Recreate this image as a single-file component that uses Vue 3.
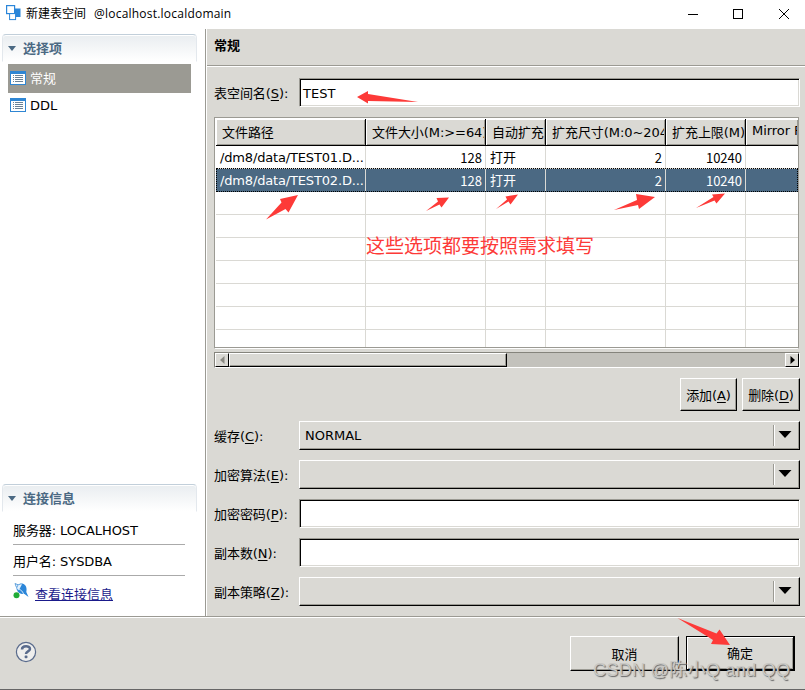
<template>
  <div class="window">
    <header class="titlebar">
      <svg class="app-icon" width="16" height="16" viewBox="0 0 16 16">
        <rect x="6" y="3.500" width="8.500" height="8.500" fill="#2b86d9" />
        <rect x=".6" y=".6" width="8" height="8" fill="#fff" stroke="#2b86d9" stroke-width="1.2" />
        <rect x="3.600" y="8.600" width="6" height="6" fill="#fff" stroke="#2b86d9" />
      </svg>
      <span class="title-cn">新建表空间</span>
      <span class="title-host">@localhost.localdomain</span>
      <svg class="controls" width="104" height="12" viewBox="0 0 104 12" fill="none" stroke="#000" shape-rendering="crispEdges">
        <path d="M0 6.5h10" />
        <rect x="45.5" y="1.5" width="9" height="9" />
        <path d="M91 1l10 10M101 1L91 11" shape-rendering="auto" />
      </svg>
    </header>

    <main class="body">
      <aside class="sidebar">
        <div class="section-head">
          <i class="twistie"></i><span>选择项</span>
        </div>
        <ul class="pages">
          <li v-for="(page, i) in pages" :key="page" :class="{ active: i === 0 }">
            <svg width="16" height="14" viewBox="0 0 16 14" shape-rendering="crispEdges">
              <rect width="16" height="14" fill="#2f86d3" />
              <rect x="1" y="3" width="14" height="10" fill="#fff" />
              <path d="M3 4.5h1M3 6.5h1M3 8.5h1M3 10.500h1M5 4.5h8M5 6.5h8M5 8.5h8M5 10.500h8" stroke="#6b8296" />
            </svg>
            <span>{{ page }}</span>
          </li>
        </ul>
        <div class="section-head connection">
          <i class="twistie"></i><span>连接信息</span>
        </div>
        <div class="info">
          <p>服务器: LOCALHOST</p>
          <p>用户名: SYSDBA</p>
          <div class="link-row">
            <svg width="17" height="17" viewBox="0 0 17 17">
              <path d="M2 1.500l3.500 1.500M2 1.500l1.500 4" fill="none" stroke="#5da0dc" />
              <path d="M3.500 6.500C3.500 3 7 1 10 1.800c3 1 4.200 4.500 3.300 8.200l2.200 5-4-3C8 12.500 4 10.500 3.500 6.500z" fill="#2b86d9" />
              <path d="M4 6.500C4 3.500 6.500 2 9 2.300L6 8z" fill="#e4f1fc" />
              <path d="M4.500 8C7 6.500 9.500 9 10.500 12" fill="none" stroke="#d7eafa" />
              <circle cx="3.500" cy="13.200" r="3" fill="#22ac38" />
            </svg>
            <a>查看连接信息</a>
          </div>
        </div>
      </aside>

      <section class="content">
        <h2>常规</h2>
        <div class="form">
          <div class="field">
            <label>表空间名(<u>S</u>):</label>
            <div class="input">TEST</div>
          </div>

          <div class="table">
            <div class="tr th">
              <div v-for="(col, i) in columns" :key="col" :class="{ latin: i === 5 }"><span>{{ col }}</span></div>
            </div>
            <div v-for="(row, r) in rows" :key="r" class="tr" :class="{ selected: r === 1 }">
              <div v-for="(cell, c) in row" :key="c" :class="{ num: numeric.includes(c), path: c === 0 }">{{ cell }}</div>
            </div>
          </div>

          <div class="scrollbar">
            <span class="sb-btn"><svg width="5" height="8" viewBox="0 0 5 8"><path d="M4.500 0v8L0 4z" fill="#8b8a83" /></svg></span>
            <span class="thumb"></span>
            <span class="sb-btn right"><svg width="5" height="8" viewBox="0 0 5 8"><path d="M.5 0v8L5 4z" /></svg></span>
          </div>

          <div class="actions">
            <button>添加(<u>A</u>)</button>
            <button>删除(<u>D</u>)</button>
          </div>

          <div v-for="f in fields" :key="f.key" class="field">
            <label>{{ f.label }}(<u>{{ f.key }}</u>):</label>
            <div v-if="f.select" class="combo">
              <span>{{ f.value }}</span>
              <i class="divider"></i>
              <svg width="14" height="7" viewBox="0 0 14 7"><path d="M.5 0h13L7 7z" /></svg>
            </div>
            <div v-else class="input"></div>
          </div>
        </div>
      </section>
    </main>

    <footer class="footer">
      <svg class="help" width="22" height="22" viewBox="0 0 22 22">
        <circle cx="11" cy="11" r="9.600" fill="#eeeeed" stroke="#596b8c" stroke-width="1.200" />
        <path d="M7 8.500C7 4.200 15 4.300 15 8c0 2.500-4 2.300-4 5" fill="none" stroke="#596b8c" stroke-width="2.500" />
        <rect x="9.600" y="14.600" width="2.900" height="2.700" rx="1" fill="#596b8c" />
      </svg>
      <button class="cancel">取消</button>
      <button class="ok">确定</button>
    </footer>

    <!-- annotations drawn over the dialog -->
    <svg class="marks" width="805" height="690" viewBox="0 0 805 690" fill="#fd3a38">
      <path v-for="d in arrows" :key="d" :d="d" />
    </svg>
    <div class="note">这些选项都要按照需求填写</div>
    <div class="watermark">CSDN @陈小Q and QQ</div>
  </div>
</template>

<script setup>
const pages = ['常规', 'DDL']

const columns = ['文件路径', '文件大小(M:>=64)', '自动扩充', '扩充尺寸(M:0~2048)', '扩充上限(M)', 'Mirror Path']
const numeric = [1, 3, 4]
const empty = ['', '', '', '', '', '']
const rows = [
  ['/dm8/data/TEST01.D...', '128', '打开', '2', '10240', ''],
  ['/dm8/data/TEST02.D...', '128', '打开', '2', '10240', ''],
  ...Array.from({ length: 7 }, () => empty)
]

const fields = [
  { label: '缓存', key: 'C', select: true, value: 'NORMAL' },
  { label: '加密算法', key: 'E', select: true },
  { label: '加密密码', key: 'P' },
  { label: '副本数', key: 'N' },
  { label: '副本策略', key: 'Z', select: true }
]

const arrows = [
  'M357 97l11-6v3l50 8-50-1v2.500z',
  'M266 219.500l15.500-17-1.500-3.500 18-4-9.500 17.500-3-3.500z',
  'M426 211l12-9.500-1.500-3.500 12.500-.5-7.500 10-2-3z',
  'M496 209l11-9.500-1.500-3 12.500-2-7.500 10-2-3z',
  'M614 210l23-10-1-6 19 3-16 12-1-4z',
  'M696 208l17.500-11-1.500-2.500 13-1-8.500 10-2-3z',
  'M677.500 618l39 15.500 3-4 10.500 15.500-19-1 2-4z'
]
</script>

<style>
body {
  margin: 0;
  overflow: hidden;
}
</style>

<style scoped>
* {
  box-sizing: border-box;
}

.window {
  position: relative;
  width: 805px;
  height: 690px;
  display: flex;
  flex-direction: column;
  overflow: hidden;
  background: #dad9d4;
  border-bottom: 1px solid #666;
  color: #000;
  font: 13px/20px "DejaVu Sans", "Noto Sans CJK SC", sans-serif;
}

.titlebar {
  height: 29px;
  flex-shrink: 0;
  display: flex;
  align-items: center;
  padding: 0 13px 2px 6px;
  background: #fff;
  font: 12px/20px "Open Sans", "Noto Sans CJK SC", sans-serif;
}

.app-icon {
  margin-top: -2px;
}

.title-cn {
  margin-left: 4px;
}

.title-host {
  margin-left: 8px;
  letter-spacing: 0.22px;
}

.controls {
  margin-left: auto;
}

.body {
  display: flex;
  height: 587px;
  flex-shrink: 0;
}

.sidebar {
  width: 207px;
  padding: 5px 9px 0 2px;
  background: #fff;
  border-right: 1px solid #fff;
  box-shadow: inset -1px 0 #9b9a93;
}

.section-head {
  height: 28px;
  display: flex;
  align-items: center;
  padding-left: 5px;
  border: 1px solid;
  border-color: #c2cfda #e3e8ed transparent;
  border-radius: 4px 4px 0 0;
  background: linear-gradient(#e9edf0, #fff) padding-box;
  box-shadow: inset 0 1px #fff;
  color: #4b6983;
  font-weight: bold;
}

.twistie {
  border: 4px solid transparent;
  border-top: 5px solid #4b6983;
  border-bottom: 0;
  margin: 0 7px 0 0;
}

.section-head span {
  padding-top: 1px;
}

.pages {
  list-style: none;
  margin: 2px 6px 0;
  padding: 0;
}

.pages li {
  display: flex;
  align-items: center;
  height: 24px;
  padding-left: 2px;
}

.pages li svg {
  margin-top: -1px;
}

.pages li span {
  margin-left: 4px;
  padding-top: 1px;
}

.pages .active {
  height: 29px;
  background: #9b9a93;
  color: #fff;
}

.connection {
  margin-top: 367px;
}

.info {
  padding: 2px 12px 0 11px;
}

.info p {
  margin: 0;
  height: 31px;
  line-height: 33px;
  letter-spacing: -0.08px;
  border-bottom: 1px solid #aaa;
}

.link-row {
  display: flex;
  padding: 6px 0 0;
}

.link-row a {
  margin: 3px 0 0 5px;
  color: #1a1a8b;
  text-decoration: underline;
}

.content {
  flex: 1;
}

h2 {
  height: 38px;
  margin: 0;
  padding-left: 7px;
  border-bottom: 1px solid #fff;
  box-shadow: inset 0 -1px #9b9a93;
  font-size: 13px;
  line-height: 33px;
}

.form {
  padding: 11px 5px 0 7px;
}

.field {
  display: flex;
  height: 29px;
  margin-bottom: 10px;
}

.field label {
  width: 85px;
  line-height: 32px;
  letter-spacing: -0.06px;
  white-space: nowrap;
}

u {
  text-underline-offset: 2px;
}

.input {
  flex: 1;
  padding-left: 3px;
  background: #fff;
  border: 1px solid;
  border-color: #9b9a93 #fff #fff #9b9a93;
  box-shadow: inset 1px 1px #000, inset -1px -1px #dad9d4;
  line-height: 29px;
}

.table {
  height: 232px;
  margin-right: 1px;
  padding: 1px 0 0 1px;
  border: 1px solid;
  border-color: #9b9a93 #9b9a93 #fff;
  box-shadow: inset 0 -1px #9b9a93;
  background: #fff;
  overflow: hidden;
}

.tr {
  display: grid;
  grid-template-columns: 150px 120px 60px 120px 80px 1fr;
  height: 23px;
  line-height: 24px;
  border-bottom: 1px solid #dad9d4;
}

.tr > div {
  padding: 0 3px 0 4px;
  border-right: 1px solid #dad9d4;
  overflow: hidden;
  white-space: nowrap;
}

.tr > div:last-child {
  border-right: 0;
}

.tr:last-child {
  height: 17px;
  border-bottom: 0;
}

.tr > .path {
  padding-right: 0;
  letter-spacing: -0.16px;
}

.tr > .num {
  text-align: right;
  font-family: "Noto Sans CJK SC", sans-serif;
}

.th {
  height: 27px;
  line-height: 28px;
  background: #dad9d4;
  border-bottom-color: #000;
}

.th > div {
  padding: 0 1px 0 6px;
  border-right-color: #000;
  box-shadow: inset 1px 1px #fff, inset -1px -1px #9b9a93;
}

.th > div span {
  display: block;
  overflow: hidden;
  letter-spacing: -0.06px;
}

.th .latin {
  line-height: 23px;
}

.tr.selected {
  position: relative;
  background: #4b6983;
  color: #fff;
  border-bottom-color: transparent;
}

.tr.selected::after {
  content: "";
  position: absolute;
  inset: -1px 0 -1px 0;
  border: 1px dotted #000;
}

.scrollbar {
  display: flex;
  height: 16px;
  margin-top: 3px;
  background: #c3c2bc;
  border: 1px solid;
  border-color: #85847c #fff #fff #85847c;
}

.sb-btn {
  width: 14px;
  display: flex;
  align-items: center;
  justify-content: center;
  background: #dad9d4;
  border: 1px solid;
  border-color: #fff #000 #000 #fff;
}

.sb-btn.right {
  margin-left: auto;
}

.thumb {
  width: 278px;
  background: #dad9d4;
  border: 1px solid;
  border-color: #fff #000 #000 #fff;
  box-shadow: inset -1px -1px #9b9a93;
}

button {
  padding: 2px 0 0;
  background: #dad9d4;
  color: #000;
  border: 1px solid;
  border-color: #fff #000 #000 #fff;
  box-shadow: inset -1px -1px #9b9a93;
  font: inherit;
}

.actions {
  display: flex;
  justify-content: flex-end;
  gap: 5px;
  margin: 10px 0;
}

.actions button {
  height: 33px;
  width: 57px;
  letter-spacing: -0.1px;
}

.actions button:last-child {
  width: 58px;
}

.combo {
  flex: 1;
  display: flex;
  align-items: center;
  padding: 0 7px 0 5px;
  border: 1px solid;
  border-color: #fff #000 #000 #fff;
  box-shadow: inset -1px -1px #9b9a93;
}

.divider {
  width: 2px;
  height: 21px;
  margin: 0 3px 0 auto;
  background: #9b9a93;
  border-right: 1px solid #fff;
}

.combo svg {
  margin-top: -2px;
}

.footer {
  flex: 1;
  display: flex;
  align-items: flex-start;
  padding: 18px 10px 0 15px;
  border-top: 1px solid #9b9a93;
  box-shadow: inset 0 1px #fff;
}

.help {
  margin-top: 6px;
}

.footer button {
  width: 109px;
  height: 35px;
  margin-top: 1px;
}

.footer .cancel {
  margin-left: auto;
}

.footer .ok {
  margin-left: 7px;
  border: 1px solid #000;
  border-right-width: 2px;
  border-bottom-width: 2px;
  box-shadow: inset 1px 1px #fff, inset -1px -1px #9b9a93;
}

.marks {
  position: absolute;
  top: 0;
  left: 0;
}

.note {
  position: absolute;
  left: 366px;
  top: 231px;
  color: #fd3a38;
  font: 19px/28px "Noto Sans CJK SC", sans-serif;
}

.watermark {
  position: absolute;
  left: 593px;
  top: 657px;
  white-space: nowrap;
  color: #c9c8c4;
  font: 18px/27px "Liberation Sans", "Noto Sans CJK SC", sans-serif;
  letter-spacing: 0.3px;
  text-shadow: 1px 1px 1px #666;
}
</style>
